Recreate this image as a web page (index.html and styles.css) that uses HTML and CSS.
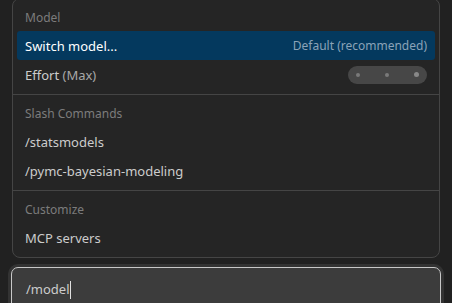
FILE: index.html
```html
<!DOCTYPE html>
<html lang="en">
  <head>
    <meta charset="UTF-8" />
    <meta name="viewport" content="width=device-width, initial-scale=1.0" />
    <title>Command menu</title>
    <link rel="stylesheet" href="styles.css">
  </head>
  <body>
    <div class="menu">
      <div class="section">
        <div class="section-title">Model</div>
        <div class="item active">
          <span class="label">Switch model...</span>
          <span class="hint">Default (recommended)</span>
        </div>
        <div class="item">
          <span class="label">Effort <span class="dim">(Max)</span></span>
          <div class="effort">
            <span class="dot"></span>
            <span class="dot"></span>
            <span class="dot on"></span>
          </div>
        </div>
      </div>

      <div class="section">
        <div class="section-title">Slash Commands</div>
        <div class="item"><span class="label">/statsmodels</span></div>
        <div class="item"><span class="label">/pymc-bayesian-modeling</span></div>
      </div>

      <div class="section">
        <div class="section-title">Customize</div>
        <div class="item"><span class="label">MCP servers</span></div>
      </div>
    </div>

    <div class="prompt">
      <span class="prompt-text">/model</span><span class="caret"></span>
    </div>
  </body>
</html>
```

FILE: styles.css
```css
* {
  margin: 0;
  padding: 0;
  box-sizing: border-box;
}
html,
body {
  width: 100%;
  height: 100%;
  overflow: hidden;
}
body {
  background-color: #212121;
  font-family: "Noto Sans", "Open Sans", sans-serif;
  font-size: 13px;
  color: #cccccc;
  padding: 0 12px;
}
/* popup list */
.menu {
  margin-top: -2px;
  background-color: #252525;
  border: 1px solid #454545;
  border-radius: 8px;
}
.section {
  padding: 5px 4px;
  border-top: 1px solid #454545;
}
.section:first-child {
  border-top: none;
}
.section-title {
  height: 27px;
  line-height: 27px;
  padding: 0 8px;
  font-size: 12px;
  color: #7c7c7c;
}
.item {
  height: 29px;
  display: flex;
  align-items: center;
  justify-content: space-between;
  padding: 0 8px;
  border-radius: 3px;
}
.item.active {
  background-color: #04395e;
  color: #ffffff;
}
.hint {
  color: #8ba3b8;
  font-size: 12px;
}
.dim {
  color: #a8a8a8;
}
/* effort slider */
.effort {
  width: 79px;
  height: 18px;
  border-radius: 9px;
  background-color: #474747;
  display: flex;
  align-items: center;
  justify-content: space-between;
  padding: 0 8px;
}
.dot {
  width: 4px;
  height: 4px;
  border-radius: 50%;
  background-color: #7a7a7a;
}
.dot.on {
  width: 5px;
  height: 5px;
  background-color: #888888;
}
/* chat input */
.prompt {
  margin: 9px -1px 0;
  height: 44px;
  background-color: #3c3c3c;
  border: 1px solid #c8c8c8;
  border-radius: 7px;
  box-shadow: 0 0 0 3px #333333;
  padding: 12px 14px 0;
  display: flex;
  align-items: flex-start;
}
.prompt-text {
  line-height: 19px;
  font-size: 13px;
  color: #cccccc;
}
.caret {
  width: 1px;
  height: 18px;
  margin-top: 1px;
  background-color: #e0e0e0;
}
```
